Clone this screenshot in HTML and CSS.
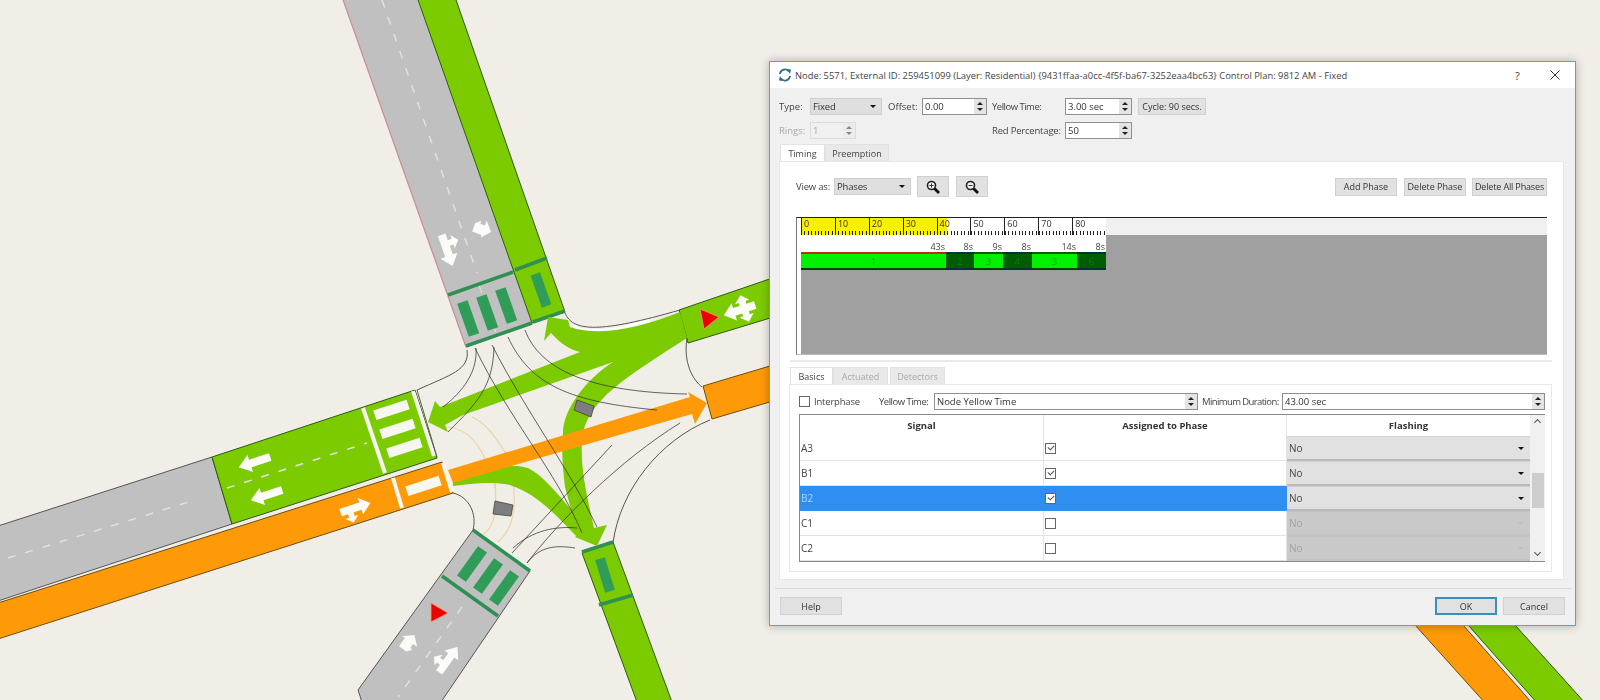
FILE: index.html
```html
<!DOCTYPE html>
<html lang="en">
<head>
<meta charset="utf-8">
<title>Node timing</title>
<link rel="stylesheet" href="styles.css">
</head>
<body>
<main class="canvas">
<svg class="map" viewBox="0 0 1600 700" width="1600" height="700" xmlns="http://www.w3.org/2000/svg">
  <defs>
    <path id="a-straight" d="M17 0L5-9V-4H-16V4H5V9Z"/>
    <path id="a-big" d="M17 0L6-9V-4H-3V-8H1L-6-14L-13-8H-9V-4H-16V4H6V9Z"/>
    <path id="a-small" d="M9 1L1-8V-3H-4V-6L-9-2V7H1V10Z"/>
    <path id="a-cross" d="M17 0L6-9V-4H-1V-7H3L-5-14L-12-7H-8V-4H-16V4H-8V7H-12L-5 14L3 7H-1V4H6V9Z"/>
  </defs>

  <!-- SE roads, mostly behind the window -->
  <polygon class="orange" points="1415,625 1463,625 1533,704 1486,704"/>
  <polygon class="green" points="1468,625 1515,625 1586,704 1538,704"/>

  <!-- North road -->
  <polygon class="gray-road north-gray" points="342,-3 417,-3 532,323 466,347"/>
  <line class="edge-pink" x1="342" y1="-3" x2="466" y2="347"/>
  <line class="dash" x1="382" y1="0" x2="477" y2="273"/>
  <line class="dash-fine" x1="479" y1="285" x2="497" y2="336"/>
  <polygon class="green" points="417,-3 455,-3 565,312 532,323"/>
  <line class="band" x1="448" y1="295" x2="513" y2="272"/>
  <line class="band" x1="466" y1="346" x2="532" y2="323"/>
  <line class="band" x1="515" y1="270" x2="547" y2="258"/>
  <line class="band" x1="533" y1="322" x2="565" y2="311"/>
  <rect class="bar-green" x="-5.500" y="-17" width="11" height="35" transform="translate(468 318) rotate(-19.4)"/>
  <rect class="bar-green" x="-5.500" y="-17" width="11" height="35" transform="translate(487 312) rotate(-19.4)"/>
  <rect class="bar-green" x="-5.500" y="-17" width="11" height="35" transform="translate(506 305) rotate(-19.4)"/>
  <rect class="bar-green" x="-5" y="-17" width="10" height="34" transform="translate(541 290) rotate(-19.4)"/>
  <use class="lane-arrow" href="#a-big" transform="translate(447 250) rotate(70.6)"/>
  <use class="lane-arrow" href="#a-small" transform="translate(483 228) rotate(20)"/>

  <!-- East roads -->
  <polygon class="green" points="679,310 790,272 790,312 688,343"/>
  <polygon class="red-mark" points="700,309 719,317 704,329"/>
  <use class="lane-arrow" href="#a-cross" transform="translate(740 310) rotate(162)"/>
  <polygon class="orange" points="703,386 790,360 790,396 712,419"/>

  <!-- West roads -->
  <polygon class="gray-road" points="-2,526 212,457 232,524 -2,601"/>
  <polygon class="green" points="212,457 415,390 437,458 232,524"/>
  <line class="dash" x1="8" y1="558" x2="195" y2="500"/>
  <line class="dash" x1="227" y1="488" x2="367" y2="443"/>
  <line class="stripe" x1="363" y1="408" x2="385" y2="473"/>
  <line class="stripe" x1="413" y1="391" x2="434" y2="456"/>
  <line class="curb" x1="417" y1="390" x2="437" y2="457"/>
  <rect class="bar-white" x="-17" y="-5" width="35" height="10" transform="translate(391 410) rotate(-18.2)"/>
  <rect class="bar-white" x="-17" y="-5" width="35" height="10" transform="translate(397 429) rotate(-18.2)"/>
  <rect class="bar-white" x="-17" y="-5" width="35" height="10" transform="translate(404 448) rotate(-18.2)"/>
  <use class="lane-arrow" href="#a-straight" transform="translate(255 462) rotate(162)"/>
  <use class="lane-arrow" href="#a-straight" transform="translate(267 495) rotate(162)"/>

  <polygon class="orange" points="-2,603 442,462 453,493 -2,639"/>
  <line class="stripe" x1="393" y1="478" x2="402" y2="508"/>
  <line class="stripe" x1="443" y1="463" x2="452" y2="492"/>
  <rect class="bar-white" x="-17" y="-5" width="35" height="10" transform="translate(423 486) rotate(-18.2)"/>
  <use class="lane-arrow" href="#a-big" transform="translate(355 508) scale(.95) rotate(-18) scale(1 -1)"/>

  <!-- South-west road -->
  <polygon class="gray-road" points="473,530 530,571 441,702 362,702 358,690"/>
  <line class="band" x1="473" y1="530" x2="530" y2="571"/>
  <line class="band" x1="442" y1="576" x2="498" y2="616"/>
  <rect class="bar-green" x="-5.500" y="-18" width="11" height="36" transform="translate(472 564) rotate(35.7)"/>
  <rect class="bar-green" x="-5.500" y="-18" width="11" height="36" transform="translate(488 576) rotate(35.7)"/>
  <rect class="bar-green" x="-5.500" y="-18" width="11" height="36" transform="translate(504 588) rotate(35.7)"/>
  <line class="dash" x1="462" y1="607" x2="398" y2="697"/>
  <polygon class="red-mark" points="431,603 448,613 431,622"/>
  <use class="lane-arrow" href="#a-small" transform="translate(410 643) rotate(-54.3) scale(1 -1)"/>
  <use class="lane-arrow" href="#a-big" transform="translate(448 660) rotate(-54.3) scale(.95)"/>

  <!-- South road -->
  <polygon class="green" points="582,553 613,542 672,702 637,702"/>
  <line class="band" x1="582" y1="552" x2="613" y2="542"/>
  <line class="band" x1="599" y1="605" x2="633" y2="595"/>
  <rect class="bar-green" x="-5" y="-17" width="10" height="34" transform="translate(605 575) rotate(-17)"/>

  <!-- Yellow movement arcs -->
  <path class="arc-pale" d="M448 427C480 430 490 470 496 490"/>
  <path class="arc-pale" d="M472 417C490 425 500 445 509 458"/>
  <path class="arc-pale" d="M495 482C497 510 496 525 483 535"/>
  <path class="arc-pale" d="M513 482C517 510 512 530 498 542"/>

  <!-- Movement ribbons -->
  <path class="halo" d="M650 322C620 332 590 338 568 327"/>
  <path class="flow-green" d="M453 482C480 470 510 462 528 468C548 478 565 505 590 530L578 538C560 520 540 495 510 485C490 481 470 484 453 486Z"/>
  <path class="flow-green" d="M680 312C640 328 600 337 570 327L568 320L548 317L544 341L551 333C560 343 570 350 580 352L440 407L435 401L428 422L448 432L445 425L463 415L613 362C585 380 563 410 563 433C561 450 563 470 565 487L578 535L575 537L597 546L607 525L594 528C588 500 580 470 582 440C585 400 630 375 687 338Z"/>
  <path class="flow-orange" d="M448 470L690 397L688 392L707 403L695 424L692 414L453 483Z"/>

  <!-- Connector lines -->
  <path class="conn" d="M476 348C478 376 457 396 443 407"/>
  <path class="conn" d="M494 347C493 387 477 403 448 432"/>
  <path class="conn" d="M475 348C510 420 555 470 582 533"/>
  <path class="conn" d="M492 345C525 410 570 470 597 527"/>
  <path class="conn" d="M508 337C530 385 570 402 657 410"/>
  <path class="conn" d="M525 330C540 370 590 392 687 394"/>
  <path class="conn" d="M512 553L612 445"/>
  <path class="conn" d="M527 563C560 520 620 460 680 423"/>
  <path class="conn" d="M513 548C533 530 556 526 577 528"/>
  <path class="conn" d="M527 563C540 546 556 545 575 548"/>
  <path class="curb" d="M467 350C470 370 450 375 417 390"/>
  <path class="curb" d="M565 313C573 332 600 333 680 310"/>
  <path class="curb" d="M687 338C683 363 693 380 702 387"/>
  <path class="curb" d="M710 420C660 440 620 490 613 543"/>
  <path class="curb" d="M453 493C470 497 477 515 473 530"/>
  <polygon class="detector" points="577,400 594,406 591,417 574,410"/>
  <polygon class="detector" points="495,501 513,505 511,516 493,514"/>
</svg>

<section class="dialog">
  <header class="titlebar">
    <svg class="app-icon" viewBox="0 0 14 14" width="14" height="14" xmlns="http://www.w3.org/2000/svg"><path class="app-arc" d="M2 6A5 5 0 0 1 11 3.500"/><path class="app-arc" d="M12 8A5 5 0 0 1 3 10.500"/><path class="app-tip" d="M9 1L13 1.500L12 6Z"/><path class="app-tip" d="M5 13L1 12.500L2 8Z"/></svg>
    <span class="title-text">Node: 5571, External ID: 259451099 (Layer: Residential) {9431ffaa-a0cc-4f5f-ba67-3252eaa4bc63} Control Plan: 9812 AM - Fixed</span>
    <span class="title-help">?</span>
    <svg class="title-close" viewBox="0 0 10 10" width="10" height="10" xmlns="http://www.w3.org/2000/svg"><path class="close-x" d="M.5.500L9.500 9.500M9.500.500L.5 9.500"/></svg>
  </header>

  <div class="top-form">
    <span class="lbl">Type:</span>
    <div class="combo"><span>Fixed</span><i class="caret"></i></div>
    <span class="lbl lbl-offset">Offset:</span>
    <div class="spin"><span>0.00</span><i class="spin-btn"></i></div>
    <span class="lbl lbl-yellow lbl-narrow">Yellow Time:</span>
    <div class="spin"><span>3.00 sec</span><i class="spin-btn"></i></div>
    <button class="btn btn-cycle">Cycle: 90 secs.</button>

    <span class="lbl lbl-off">Rings:</span>
    <div class="spin spin-off"><span>1</span><i class="spin-btn"></i></div>
    <span></span><span></span>
    <span class="lbl lbl-yellow lbl-tight">Red Percentage:</span>
    <div class="spin"><span>50</span><i class="spin-btn"></i></div>
  </div>

  <nav class="tabs tabs-main">
    <span class="tab tab-on">Timing</span>
    <span class="tab">Preemption</span>
  </nav>

  <div class="panel">
    <div class="toolbar">
      <span class="lbl lbl-tight">View as:</span>
      <div class="combo combo-view"><span>Phases</span><i class="caret"></i></div>
      <button class="btn btn-zoom"><svg viewBox="0 0 16 16" width="16" height="16" xmlns="http://www.w3.org/2000/svg"><circle class="lens" cx="6.500" cy="6.500" r="4"/><path class="lens-mark" d="M4.500 6.500H8.500M6.500 4.500V8.500"/><path class="lens-grip" d="M9.500 9.500L14 14"/></svg></button>
      <button class="btn btn-zoom"><svg viewBox="0 0 16 16" width="16" height="16" xmlns="http://www.w3.org/2000/svg"><circle class="lens" cx="6.500" cy="6.500" r="4"/><path class="lens-mark" d="M4.500 6.500H8.500"/><path class="lens-grip" d="M9.500 9.500L14 14"/></svg></button>
      <span class="spacer"></span>
      <button class="btn btn-phase">Add Phase</button>
      <button class="btn btn-phase">Delete Phase</button>
      <button class="btn btn-phase-wide">Delete All Phases</button>
    </div>

    <div class="timeline">
      <div class="ruler-row">
        <div class="ruler">
          <span>0</span><span>10</span><span>20</span><span>30</span><span>40</span><span>50</span><span>60</span><span>70</span><span>80</span>
        </div>
      </div>
      <div class="lane">
        <div class="lane-used">
          <div class="secs">
            <span class="w1">43s</span><span class="w2">8s</span><span class="w3">9s</span><span class="w4">8s</span><span class="w5">14s</span><span class="w6">8s</span>
          </div>
          <div class="bars">
            <span class="w1 seg seg-first">1</span><span class="w2 seg seg-dark">2</span><span class="w3 seg">3</span><span class="w4 seg seg-dark">4</span><span class="w5 seg">3</span><span class="w6 seg seg-dark">6</span>
          </div>
        </div>
      </div>
    </div>

    <div class="rule"></div>

    <nav class="tabs tabs-sub">
      <span class="tab tab-on">Basics</span>
      <span class="tab tab-off">Actuated</span>
      <span class="tab tab-off">Detectors</span>
    </nav>

    <div class="subpanel">
      <div class="phase-form">
        <label class="check-label"><i class="check"></i>Interphase</label>
        <span class="lbl lbl-narrow">Yellow Time:</span>
        <div class="spin spin-long"><span>Node Yellow Time</span><i class="spin-btn"></i></div>
        <span class="lbl lbl-min">Minimum Duration:</span>
        <div class="spin spin-long"><span>43.00 sec</span><i class="spin-btn"></i></div>
      </div>

      <div class="table">
        <div class="th">Signal</div><div class="th">Assigned to Phase</div><div class="th">Flashing</div>
        <div class="scrollbar"><i class="chev chev-up"></i><i class="thumb"></i><i class="chev chev-down"></i></div>

        <div class="td">A3</div><div class="td td-check"><i class="check check-on"></i></div><div class="td td-combo"><div class="flash"><span>No</span><i class="caret"></i></div></div>
        <div class="td">B1</div><div class="td td-check"><i class="check check-on"></i></div><div class="td td-combo"><div class="flash"><span>No</span><i class="caret"></i></div></div>
        <div class="td td-sel">B2</div><div class="td td-check td-sel"><i class="check check-on"></i></div><div class="td td-combo"><div class="flash"><span>No</span><i class="caret"></i></div></div>
        <div class="td">C1</div><div class="td td-check"><i class="check"></i></div><div class="td td-combo"><div class="flash flash-off"><span>No</span><i class="caret"></i></div></div>
        <div class="td">C2</div><div class="td td-check"><i class="check"></i></div><div class="td td-combo"><div class="flash flash-off"><span>No</span><i class="caret"></i></div></div>
      </div>
    </div>
  </div>

  <footer class="footer">
    <button class="btn btn-foot">Help</button>
    <span class="spacer"></span>
    <button class="btn btn-foot btn-default">OK</button>
    <button class="btn btn-foot">Cancel</button>
  </footer>
</section>
</main>
</body>
</html>
```
FILE: styles.css
```css
* { box-sizing: border-box; }
html, body { margin: 0; padding: 0; height: 100%; }
body { background: #f1eee7; font-family: "Open Sans", "Noto Sans", "Liberation Sans", sans-serif; font-size: 9.5px; color: #333; overflow: hidden; }
.canvas { position: relative; width: 1600px; height: 700px; overflow: hidden; filter: blur(.35px); }
.map { position: absolute; left: 0; top: 0; }

/* map */
.gray-road { fill: #c0c0c0; stroke: #555; stroke-width: 1; }
.north-gray { stroke: none; }
.edge-pink { stroke: #c98b96; stroke-width: 1.2; }
.green { fill: #7ccb00; stroke: #2d5a10; stroke-width: 1; }
.orange { fill: #fe9a08; stroke: #6d4d10; stroke-width: 1; }
.dash { stroke: #e2e2de; stroke-width: 1.4; stroke-dasharray: 8 10; fill: none; }
.dash-fine { stroke: #dfeadf; stroke-width: 1; stroke-dasharray: 8 6; }
.band { stroke: #2e9052; stroke-width: 3.500; fill: none; }
.bar-green { fill: #2f9d58; }
.bar-white { fill: #f7f7f2; }
.stripe { stroke: #f7f7f2; stroke-width: 4; }
.lane-arrow { fill: #fbfbf8; }
.red-mark { fill: #ee0000; stroke: #f3a06a; stroke-width: .8; }
.flow-green { fill: #7ccb00; }
.flow-orange { fill: #fe9a08; }
.halo { fill: none; stroke: #fff; stroke-width: 7; }
.conn { fill: none; stroke: #333; stroke-width: 1; opacity: .75; }
.curb { fill: none; stroke: #555; stroke-width: 1; }
.arc-pale { fill: none; stroke: #e8d3a6; stroke-width: 1.2; }
.detector { fill: #7d7d80; stroke: #444; stroke-width: .8; }

/* window */
.dialog { position: absolute; left: 769px; top: 61px; width: 807px; height: 565px; background: #f0f0f0; border: 1px solid #6f9db5; box-shadow: 0 0 9px rgba(0, 0, 0, .28); display: flex; flex-direction: column; }
.titlebar { height: 26px; flex: none; background: #fff; display: flex; align-items: center; padding-left: 8px; }
.app-icon { flex: none; margin-right: 3px; }
.app-arc { fill: none; stroke: #2f6f86; stroke-width: 1.8; }
.app-tip { fill: #2f6f86; }
.title-text { font-size: 9.4px; color: #444; flex: 1; white-space: nowrap; }
.title-help { font-size: 11px; color: #444; width: 12px; margin-right: 23px; }
.title-close { margin-right: 15px; }
.close-x { stroke: #333; stroke-width: 1; fill: none; }

.lbl { color: #444; white-space: nowrap; align-self: center; }
.lbl-off { color: #aaa; }
.lbl-offset { padding-left: 6px; }
.lbl-yellow { padding-left: 5px; }
.lbl-narrow { letter-spacing: -.5px; }
.lbl-tight { letter-spacing: -.2px; }

.top-form { display: grid; grid-template-columns: 31px 72px 40px 65px 78px 67px 74px; grid-auto-rows: 17px; row-gap: 7px; padding: 10px 0 0 9px; height: 51px; flex: none; align-items: stretch; justify-content: start; }

.combo { background: #dfdfdf; border: 1px solid #cfcfcf; display: flex; align-items: center; justify-content: space-between; padding: 0 5px 0 2px; color: #333; letter-spacing: -.15px; }
.caret { width: 0; height: 0; border-left: 3px solid transparent; border-right: 3px solid transparent; border-top: 3px solid #111; flex: none; }
.spin { background: #fff; border: 1px solid #8f8f8f; display: flex; align-items: center; justify-content: space-between; padding-left: 2px; color: #333; }
.spin-btn { width: 12px; height: 100%; background: #e4e4e4; position: relative; flex: none; }
.spin-btn::before, .spin-btn::after { content: ""; position: absolute; left: 3px; border-left: 3px solid transparent; border-right: 3px solid transparent; }
.spin-btn::before { top: 3px; border-bottom: 3px solid #222; }
.spin-btn::after { bottom: 3px; border-top: 3px solid #222; }
.spin-off { width: 46px; background: #f0f0f0; border-color: #dcdcdc; color: #aaa; }
.spin-off .spin-btn { background: #ececec; }
.spin-off .spin-btn::before { border-bottom-color: #888; }
.spin-off .spin-btn::after { border-top-color: #888; }

.btn { font: inherit; font-size: 9px; color: #333; background: #e1e1e1; border: 1px solid #d0d0d0; padding: 0; display: flex; align-items: center; justify-content: center; white-space: nowrap; }
.btn-cycle { margin-left: 6px; }

.tabs { display: flex; flex: none; font-size: 9px; }
.tabs-main { margin: 5px 0 0 10px; height: 17px; }
.tab { display: flex; align-items: center; justify-content: center; background: #e9e9e9; color: #444; border: 1px solid #e2e2e2; border-bottom: none; }
.tab-on { background: #fff; }
.tabs-main .tab { width: 64px; }
.tabs-main .tab-on { width: 45px; }

.panel { width: 785px; height: 419px; flex: none; margin-left: 9px; background: #fff; border: 1px solid #e6e6e6; padding: 14px 16px 0; display: flex; flex-direction: column; }
.toolbar { display: flex; align-items: center; height: 21px; flex: none; }
.combo-view { width: 77px; height: 17px; margin-left: 4px; }
.btn-zoom { width: 32px; height: 21px; margin-left: 6px; }
.btn-zoom + .btn-zoom { margin-left: 7px; }
.btn-phase { width: 62px; height: 18px; margin-left: 7px; }
.btn-phase-wide { width: 75px; height: 18px; margin-left: 6px; letter-spacing: -.15px; }
.spacer { flex: 1; }
.lens { fill: #eef2f2; stroke: #222; stroke-width: 1.600; }
.lens-mark { stroke: #333; stroke-width: 1; }
.lens-grip { stroke: #111; stroke-width: 2.800; }

.timeline { margin-top: 20px; height: 138px; flex: none; border: 1px solid #777; border-top-color: #222; border-right: none; border-bottom-color: #bbb; padding-left: 4px; display: flex; flex-direction: column; }
.ruler-row { height: 17px; flex: none; background: #f0f0f0; }
.ruler { width: 305px; height: 17px; display: flex; background: repeating-linear-gradient(90deg, #222 0 1px, transparent 1px 3.400px) bottom left / 100% 4px no-repeat, linear-gradient(90deg, #f7f000 0 146px, #fff 146px); }
.ruler span { width: 34px; height: 17px; border-left: 1px solid #222; padding-left: 2px; font-size: 9px; line-height: 12px; color: #333; }
.lane { flex: 1; background: #a0a0a0; }
.lane-used { width: 305px; background: #fff; }
.secs { display: flex; height: 17px; font-size: 9px; line-height: 23px; color: #444; text-align: right; }
.secs span { padding-right: 1px; }
.bars { display: flex; height: 18px; }
.w1 { width: 145px; }
.w2 { width: 28px; }
.w3 { width: 29px; }
.w4 { width: 29px; }
.w5 { width: 45px; }
.w6 { width: 29px; }
.seg { display: flex; align-items: center; justify-content: center; background: #00f000; color: #0d9c0d; border-top: 2px solid #0a5a0a; border-bottom: 2px solid #063c06; font-size: 9.5px; }
.seg-first { border-top-color: #c22a10; }
.seg-dark { background: #005c00; color: #0b7c0b; border-color: #033; }

.rule { height: 2px; flex: none; margin: 5px -5px 0 -6px; background: #e9e9e9; }
.tabs-sub { margin: 5px 0 0 -6px; height: 17px; }
.tabs-sub .tab { width: 55px; }
.tabs-sub .tab-on { width: 43px; }
.tab-off { color: #aaa; margin-right: 2px; }

.subpanel { margin: 0 -5px 0 -7px; height: 188px; flex: none; background: #fff; border: 1px solid #e8e8e8; padding: 8px 8px 0 9px; }
.phase-form { display: grid; grid-template-columns: 80px 55px 264px 84px 263px; height: 17px; }
.check-label { display: flex; align-items: center; color: #444; white-space: nowrap; letter-spacing: -.2px; }
.check-label .check { margin-right: 4px; }
.check { width: 11px; height: 11px; background: #fff; border: 1px solid #666; display: block; flex: none; position: relative; }
.check-on::after { content: ""; position: absolute; left: 2px; top: 1px; width: 5px; height: 3px; border-left: 1.400px solid #555; border-bottom: 1.400px solid #555; transform: rotate(-45deg); }
.lbl-min { padding-left: 4px; letter-spacing: -.6px; }
.spin-long { margin: 0; }

.table { display: grid; grid-template-columns: 244px 243px 243px 15px; grid-template-rows: 21px repeat(5, 25px); margin-top: 4px; height: 148px; width: 746px; border: 1px solid #8a8a8a; background: #fff; }
.th { display: flex; align-items: center; justify-content: center; font-weight: 700; color: #333; border-right: 1px solid #e4e4e4; }
.th:nth-child(3) { border-right: none; }
.td { display: flex; align-items: center; padding-left: 1px; color: #444; border-bottom: 1px solid #e2e2e2; border-right: 1px solid #e4e4e4; font-size: 10px; }
.td-check { padding-left: 1px; }
.td-combo { padding: 0; border-right: none; border-bottom: none; }
.td-sel { background: #2f8ff0; color: #a9d4ff; border-color: #2f8ff0; }
.flash { width: 100%; height: 100%; background: #e1e1e1; border-top: 1px solid #d0d0d0; border-bottom: 2px solid #b9b9b9; display: flex; align-items: center; justify-content: space-between; padding: 0 6px 0 2px; color: #444; }
.flash-off { background: #c9c9c9; color: #a2a2a2; border-color: #c2c2c2; }
.flash-off .caret { border-top-color: #bdbdbd; }
.scrollbar { grid-column: 4; grid-row: 1 / span 6; display: flex; flex-direction: column; align-items: center; background: #f0f0f0; padding-top: 5px; }
.thumb { width: 12px; height: 35px; margin-top: 48px; background: #cdcdcd; display: block; }
.chev { width: 5px; height: 5px; border-left: 1px solid #555; border-top: 1px solid #555; display: block; }
.chev-up { transform: rotate(45deg); }
.chev-down { transform: rotate(225deg); margin-top: auto; margin-bottom: 6px; }

.footer { margin: 8px 3px 0 5px; border-top: 1px solid #d8d8d8; height: 37px; padding: 8px 7px 0 5px; display: flex; flex: none; gap: 6px; }
.btn-foot { width: 62px; height: 18px; }
.btn-default { border: 2px solid #3f8fb5; }
```
